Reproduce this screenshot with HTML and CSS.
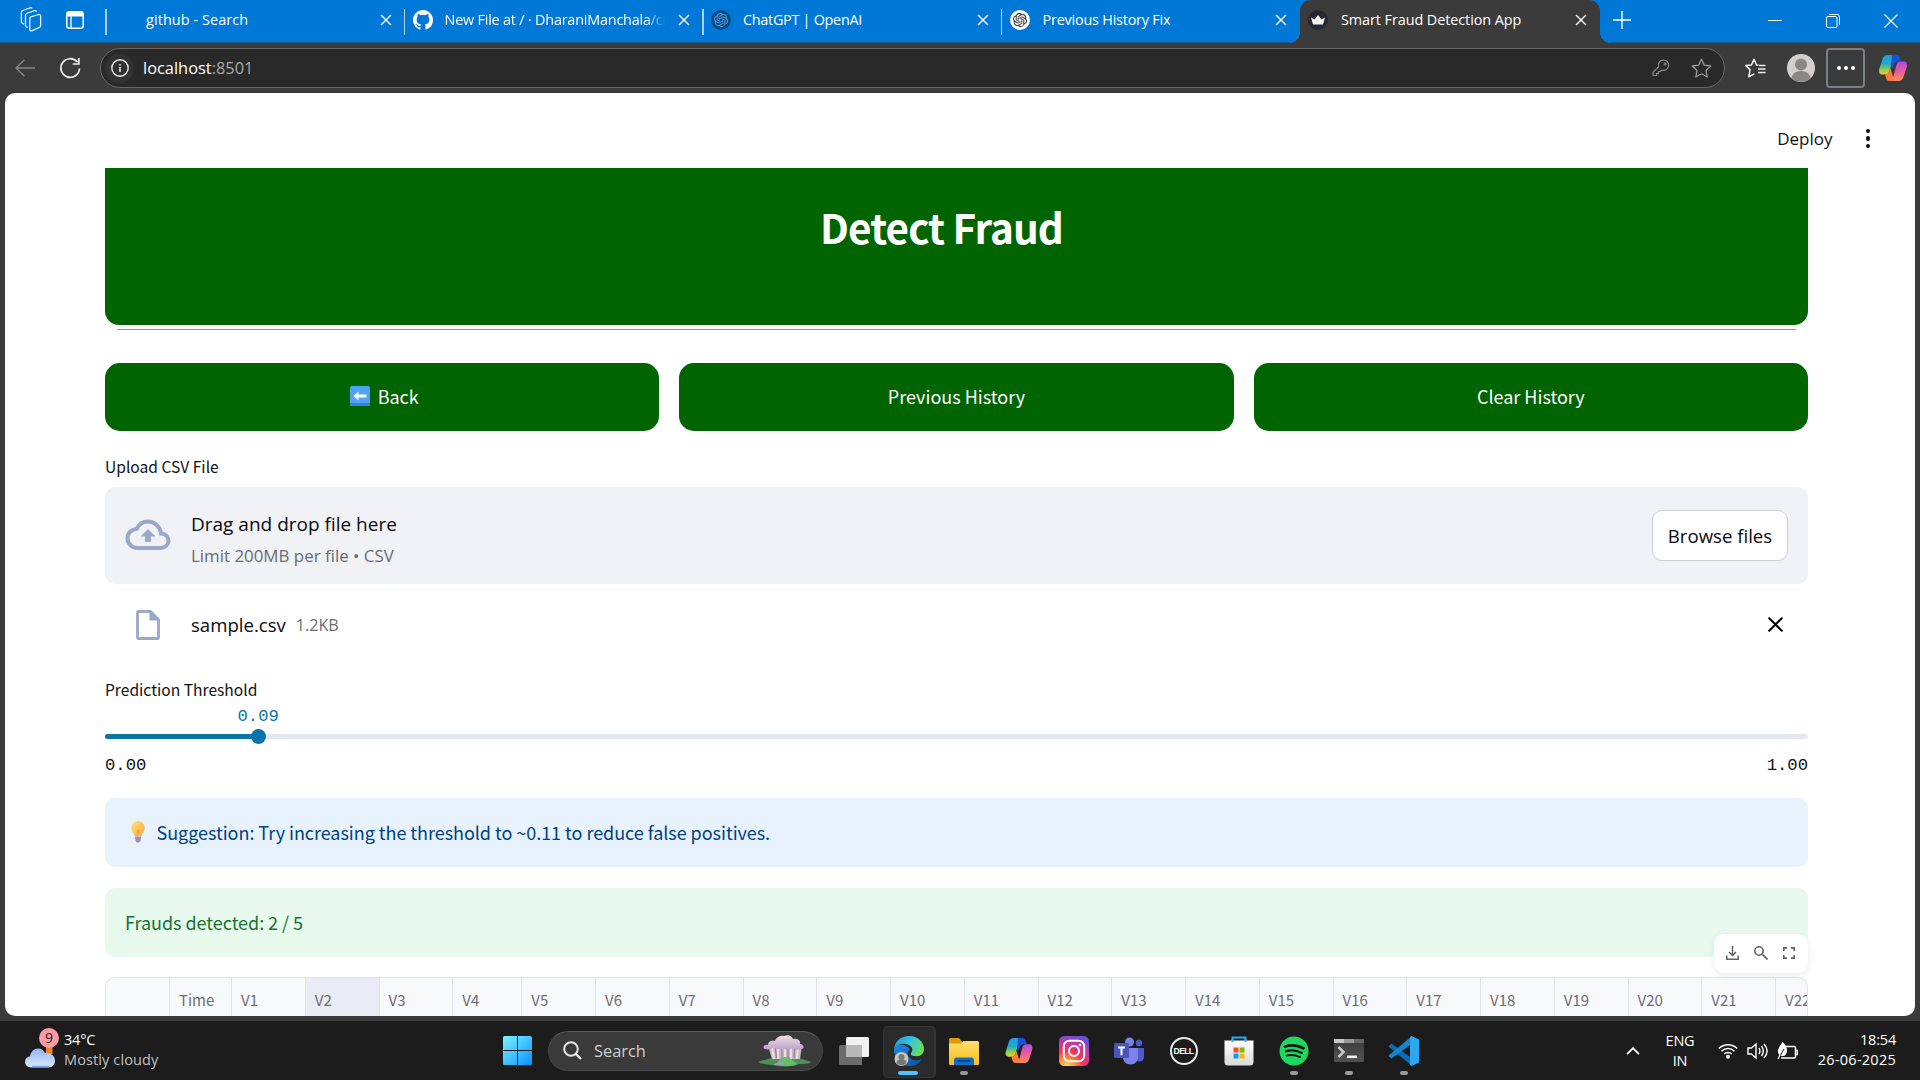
FILE: index.html
```html
<!DOCTYPE html>
<html lang="en">
<head>
<meta charset="utf-8">
<title>Smart Fraud Detection App</title>
<link rel="stylesheet" href="styles.css">
</head>
<body>
<svg class="defs" width="0" height="0">
  <defs>
    <linearGradient id="cpA" x1="0" y1="0" x2="0" y2="1"><stop offset="0" stop-color="#1a9ff0"/><stop offset=".45" stop-color="#22a9c9"/><stop offset=".75" stop-color="#8fce4e"/><stop offset="1" stop-color="#f7cf1c"/></linearGradient>
    <linearGradient id="cpB" x1=".2" y1="0" x2=".3" y2="1"><stop offset="0" stop-color="#a44df0"/><stop offset=".5" stop-color="#e8589f"/><stop offset="1" stop-color="#ff8a55"/></linearGradient>
    <linearGradient id="win" x1="0" y1="0" x2="1" y2="1"><stop offset="0" stop-color="#7af3ff"/><stop offset="1" stop-color="#0a93fb"/></linearGradient>
    <linearGradient id="edgeTop" x1="0" y1=".3" x2="1" y2=".6"><stop offset="0" stop-color="#1f9de0"/><stop offset=".5" stop-color="#35c4dc"/><stop offset="1" stop-color="#6be04c"/></linearGradient>
    <linearGradient id="edgeLow" x1="0" y1="0" x2="1" y2="1"><stop offset="0" stop-color="#1b8ee0"/><stop offset="1" stop-color="#0b4f9e"/></linearGradient>
    <linearGradient id="fold" x1="0" y1="0" x2="0" y2="1"><stop offset="0" stop-color="#ffdf70"/><stop offset="1" stop-color="#fbbc17"/></linearGradient>
    <radialGradient id="ig" cx=".25" cy="1.05" r="1.1"><stop offset="0" stop-color="#ffdd55"/><stop offset=".25" stop-color="#ff9a3d"/><stop offset=".5" stop-color="#f4364f"/><stop offset=".75" stop-color="#c837ab"/><stop offset="1" stop-color="#6a4fd8"/></radialGradient>
    <linearGradient id="cloud" x1="0" y1="0" x2="0" y2="1"><stop offset="0" stop-color="#8fb6f3"/><stop offset="1" stop-color="#dbe9fb"/></linearGradient>
    <linearGradient id="bulb" x1="0" y1="0" x2="1" y2="1"><stop offset="0" stop-color="#ffe37a"/><stop offset="1" stop-color="#fba93a"/></linearGradient>
    <linearGradient id="term" x1="0" y1="0" x2="0" y2="1"><stop offset="0" stop-color="#3c3c3c"/><stop offset="1" stop-color="#505050"/></linearGradient>
    <linearGradient id="bag" x1="0" y1="0" x2="0" y2="1"><stop offset="0" stop-color="#fff"/><stop offset="1" stop-color="#d9d9d9"/></linearGradient>
    <linearGradient id="tree" x1="0" y1="0" x2="0" y2="1"><stop offset="0" stop-color="#f1dce0"/><stop offset="1" stop-color="#b9a4cf"/></linearGradient>
    <symbol id="x" viewBox="0 0 12 12"><path d="M1 1l10 10M11 1L1 11" fill="none" stroke="currentColor" stroke-width="1.4"/></symbol>
    <symbol id="openai" viewBox="0 0 24 24"><path fill="currentColor" d="M22.28 9.82a5.98 5.98 0 0 0-.52-4.91 6.05 6.05 0 0 0-6.51-2.9A6.07 6.07 0 0 0 4.98 4.18a5.98 5.98 0 0 0-4 2.9 6.05 6.05 0 0 0 .74 7.1 5.98 5.98 0 0 0 .51 4.91 6.05 6.05 0 0 0 6.52 2.9A5.98 5.98 0 0 0 13.26 24a6.06 6.06 0 0 0 5.77-4.21 5.99 5.99 0 0 0 4-2.9 6.06 6.06 0 0 0-.75-7.07zm-9.02 12.61a4.48 4.48 0 0 1-2.88-1.04l.14-.08 4.78-2.76a.8.8 0 0 0 .39-.68v-6.74l2.02 1.17a.07.07 0 0 1 .04.05v5.58a4.5 4.5 0 0 1-4.49 4.5zm-9.66-4.13a4.47 4.47 0 0 1-.53-3.01l.14.09 4.78 2.76a.77.77 0 0 0 .78 0l5.84-3.37v2.33a.08.08 0 0 1-.03.06L9.74 19.95a4.5 4.5 0 0 1-6.14-1.65zM2.34 7.9a4.49 4.49 0 0 1 2.37-1.98V11.6a.77.77 0 0 0 .39.68l5.81 3.35-2.02 1.17a.08.08 0 0 1-.07 0l-4.83-2.79A4.5 4.5 0 0 1 2.34 7.87zm16.6 3.86L13.1 8.36l2.02-1.16a.08.08 0 0 1 .07 0l4.83 2.79a4.49 4.49 0 0 1-.68 8.1v-5.68a.79.79 0 0 0-.4-.65zm2.01-3.02l-.14-.09-4.78-2.78a.78.78 0 0 0-.78 0L9.41 9.23V6.9a.07.07 0 0 1 .03-.06l4.83-2.79a4.5 4.5 0 0 1 6.68 4.66zM8.31 12.86l-2.02-1.16a.08.08 0 0 1-.04-.06V6.07a4.5 4.5 0 0 1 7.38-3.45l-.14.08-4.78 2.76a.8.8 0 0 0-.4.68zm1.1-2.36l2.6-1.5 2.6 1.5v3l-2.6 1.5-2.6-1.5z"/></symbol>
    <symbol id="copilot" viewBox="0 0 28 26"><path fill="url(#cpA)" d="M9 0h9c-2.500 0-3.500 1.500-4.200 4L10.500 16c-.8 2.500-2 3.500-4.500 3.500H3C.5 19.500-.4 17 .2 14L3.500 4C4.500 1.200 6 0 9 0z"/><path fill="#1753d8" d="M13 0h5c1.800 0 2.500 1.500 3.200 4l.8 2.500h-3c-2.400 0-3.600 1.500-4.300 3.500l-1.500 4-1-5z"/><path fill="url(#cpB)" d="M19 26h-9c2.500 0 3.500-1.500 4.200-4L17.500 10c.8-2.500 2-3.500 4.500-3.500h3c2.500 0 3.400 2.500 2.800 5.500L24.500 22c-1 2.800-2.500 4-5.500 4z"/><path fill="#ff7a3c" d="M15 26h-5c-1.800 0-2.500-1.500-3.200-4L6 19.500c2.500 0 3.800-1 4.500-3.500l1-3z"/></symbol>
  </defs>
</svg>

<header class="tabbar">
  <div class="tabtools">
    <svg width="22" height="26" viewBox="0 0 22 26" fill="none" stroke="#e4f1fd" stroke-width="1.300" stroke-linejoin="round"><path d="M10.800 9.800l7.800-2.300c1.200-.3 2 .3 2 1.400v9.800c0 .8-.4 1.400-1.200 1.700l-7.600 3.400c-1 .4-2-.2-2-1.300v-11c0-.9.300-1.400 1-1.700zM8 20.500l-1.500-.6c-.7-.3-1-.8-1-1.600V8.200c0-.8.400-1.400 1.200-1.700l7.800-2.800c1-.3 1.700 0 2 1M4.200 17.200l-1.800-.8c-.7-.3-1-.8-1-1.500V5.200c0-.8.400-1.400 1.200-1.700l7.600-2.700c.9-.3 1.600 0 1.900.8"/></svg>
    <svg width="18" height="18" viewBox="0 0 18 18"><rect x=".8" y=".8" width="16.400" height="16.400" rx="2.500" fill="none" stroke="#fff" stroke-width="1.500"/><path fill="#fff" d="M1 1h16v4.500H1z"/><path d="M5 5v12" stroke="#fff" stroke-width="1.300"/></svg>
  </div>
  <div class="tab"><span class="fav"></span><span class="name n1">github - Search</span><svg class="tx" width="12" height="12"><use href="#x"/></svg></div>
  <div class="tab"><svg class="fav" width="20" height="20" viewBox="0 0 16 16"><path fill="#fff" d="M8 0C3.580 0 0 3.580 0 8c0 3.540 2.290 6.530 5.470 7.590.4.070.55-.17.55-.38 0-.19-.01-.82-.01-1.490-2.010.37-2.530-.49-2.690-.94-.09-.23-.48-.94-.82-1.130-.28-.15-.68-.52-.01-.53.63-.01 1.080.58 1.230.82.72 1.210 1.870.87 2.330.66.070-.52.28-.87.51-1.070-1.780-.2-3.640-.89-3.640-3.950 0-.87.31-1.590.82-2.150-.08-.2-.36-1.020.08-2.120 0 0 .67-.21 2.200.82a7.500 7.500 0 0 1 4 0c1.530-1.040 2.200-.82 2.200-.82.44 1.100.16 1.920.08 2.120.51.56.82 1.270.82 2.150 0 3.070-1.870 3.750-3.650 3.950.29.25.54.73.54 1.480 0 1.070-.01 1.930-.01 2.200 0 .21.15.46.55.38A8 8 0 0 0 16 8c0-4.420-3.580-8-8-8z"/></svg><span class="name n2">New File at / · DharaniManchala/cr</span><svg class="tx" width="12" height="12"><use href="#x"/></svg></div>
  <div class="tab"><span class="fav gpt dim"><svg width="14" height="14"><use href="#openai"/></svg></span><span class="name n3">ChatGPT | OpenAI</span><svg class="tx" width="12" height="12"><use href="#x"/></svg></div>
  <div class="tab"><span class="fav gpt"><svg width="14" height="14"><use href="#openai"/></svg></span><span class="name n4">Previous History Fix</span><svg class="tx" width="12" height="12"><use href="#x"/></svg></div>
  <div class="tab active"><span class="fav crown"><svg width="14" height="10" viewBox="0 0 14 10"><path fill="#f4f4f4" d="M0 2.500l3.500 2L7 0l3.500 4.500 3.500-2L12 9.500H2z"/></svg></span><span class="name n5">Smart Fraud Detection App</span><svg class="tx" width="12" height="12"><use href="#x"/></svg></div>
  <svg class="plus" width="18" height="18" viewBox="0 0 18 18"><path d="M9 0v18M0 9h18" stroke="#fff" stroke-width="1.400"/></svg>
  <div class="winctl">
    <svg width="14" height="14" viewBox="0 0 14 14"><path d="M0 6.500h14" stroke="#fff"/></svg>
    <svg width="14" height="14" viewBox="0 0 14 14" fill="none" stroke="#fff"><rect x=".5" y="2.500" width="10.500" height="11" rx="1.500"/><path d="M3 .5h8c1.500 0 2.500 1 2.500 2.500v8"/></svg>
    <svg width="14" height="14" viewBox="0 0 14 14"><path d="M.5.5l13 13M13.500.5l-13 13" stroke="#fff" stroke-width="1.200"/></svg>
  </div>
</header>

<div class="toolbar">
  <svg width="20" height="18" viewBox="0 0 20 18" fill="none" stroke="#858585" stroke-width="1.400"><path d="M20 9H1M9.500.8L1 9l8.500 8.200"/></svg>
  <svg class="reload" width="22" height="22" viewBox="0 0 22 22" fill="none" stroke="#f2f2f2" stroke-width="1.700"><path d="M20.500 11.500A9.300 9.300 0 1 1 18.300 5M19.800 1v6h-6"/></svg>
  <div class="address">
    <span class="info"><svg width="18" height="18" viewBox="0 0 18 18"><circle cx="9" cy="9" r="8.200" fill="none" stroke="#eee" stroke-width="1.400"/><path d="M9 8v5M9 5v1.500" stroke="#eee" stroke-width="1.500"/></svg></span>
    <span class="url">localhost<i>:8501</i></span>
    <svg class="key" width="18" height="18" viewBox="0 0 18 18" fill="none" stroke="#8c8c8c" stroke-width="1.200"><path d="M11.500 1a5.200 5.200 0 0 1 0 10.400c-.8 0-1.300-.1-1.900-.3L8 12.600H6.300v2H4.500v1.900H1v-3.200l5.600-5.500A5.200 5.200 0 0 1 11.500 1z"/><circle cx="13" cy="5" r="1"/></svg>
    <svg width="21" height="20" viewBox="0 0 21 20" fill="none" stroke="#9a9a9a" stroke-width="1.300" stroke-linejoin="round"><path d="M10.500 1.200l2.800 6 6.400.8-4.700 4.500 1.200 6.500-5.700-3.200L4.800 19 6 12.500 1.300 8l6.400-.8z"/></svg>
  </div>
  <svg class="favs" width="21" height="20" viewBox="0 0 21 20" fill="none" stroke="#f2f2f2" stroke-width="1.500" stroke-linejoin="round"><path d="M13.500 7.300l-2-.3L9 1.200 6.500 6.900l-5.700.7 4.200 4-1.200 7.200 5.500-3M14 7.500h6.500M13 11h7.500M13 14.500h7.500"/></svg>
  <svg class="avatar" width="28" height="28" viewBox="0 0 28 28"><circle cx="14" cy="14" r="14" fill="#d2d0ce"/><circle cx="14" cy="10.500" r="6" fill="#8a8886"/><path d="M4.500 24a9.500 7 0 0 1 19 0A14 14 0 0 1 4.500 24z" fill="#8a8886"/></svg>
  <div class="more"><b></b><b></b><b></b></div>
  <svg class="cp" width="28" height="26"><use href="#copilot"/></svg>
</div>

<main class="page">
  <div class="apphead"><span class="deploy">Deploy</span><div class="dots"><b></b><b></b><b></b></div></div>
  <section class="content">
    <h1 class="banner"><span>Detect Fraud</span></h1>
    <div class="rule"></div>
    <div class="actions">
      <button><svg class="arrow" width="20" height="20" viewBox="0 0 20 20"><rect width="20" height="20" rx="2" fill="#4fa3f7"/><path d="M0 17h20v1a2 2 0 0 1-2 2H2a2 2 0 0 1-2-2z" fill="#3a7fdc"/><path d="M3.500 10l5-4.500v3H16.500v3H8.500v3z" fill="#fff"/></svg><span>Back</span></button>
      <button><span>Previous History</span></button>
      <button><span>Clear History</span></button>
    </div>
    <div class="label up">Upload CSV File</div>
    <div class="drop">
      <svg class="cloudup" width="46" height="32" viewBox="0 0 46 32"><path d="M12.500 29h23c4.500 0 8-3.200 8-7.300 0-4-3.200-7.200-7.500-7.200C35 7.500 29.500 2.500 23 2.500c-5 0-9.200 2.800-11.200 7.200C6.500 10.200 2.500 14.200 2.500 19.200 2.500 24.600 7 29 12.500 29z" fill="none" stroke="#9aa7c7" stroke-width="4"/><path fill="#9aa7c7" d="M23 10l7.500 7.500H26V23h-6v-5.500h-4.500z"/></svg>
      <div class="droptext"><span class="d1">Drag and drop file here</span><span class="d2">Limit 200MB per file • CSV</span></div>
      <button class="browse"><span>Browse files</span></button>
    </div>
    <div class="fileline"></div>
    <div class="file">
      <svg width="24" height="30" viewBox="0 0 24 30"><path d="M3 1.500h11.500L22.500 9.500V27c0 1-.5 1.500-1.500 1.500H3c-1 0-1.500-.5-1.500-1.500V3c0-1 .5-1.500 1.500-1.500z" fill="none" stroke="#9aa7c7" stroke-width="2.800"/><path fill="#9aa7c7" d="M13.500 1.500l9 9h-9z"/></svg>
      <span class="fname">sample.csv</span><span class="fsize">1.2KB</span>
      <svg class="fx" width="15" height="15" viewBox="0 0 15 15"><path d="M1.200 1.200l12.600 12.600M13.800 1.200L1.200 13.800" stroke="#000" stroke-width="2" stroke-linecap="round"/></svg>
    </div>
    <div class="label thr">Prediction Threshold</div>
    <div class="sval">0.09</div>
    <div class="track"><div class="fill" style="width:9%"></div><div class="thumb"></div></div>
    <div class="range"><span>0.00</span><span>1.00</span></div>
    <div class="alert infobox"><svg width="14" height="22" viewBox="0 0 14 22"><path d="M7 0a6.800 6.800 0 0 1 6.800 6.800c0 3.400-2.600 5-3.200 8.200H3.400C2.800 11.800.2 10.200.2 6.800A6.800 6.800 0 0 1 7 0z" fill="url(#bulb)"/><path d="M5.500 9.500L7 8l1.500 1.500L7.500 15h-1z" fill="#f6a52e"/><path d="M4 15.500h6l-.5 4.500L8 21.500H6L4.500 20z" fill="#a48bb3"/></svg><span>Suggestion: Try increasing the threshold to ~0.11 to reduce false positives.</span></div>
    <div class="alert okbox"><span>Frauds detected: 2 / 5</span>
      <div class="gridtools">
        <svg width="13" height="14" viewBox="0 0 13 14" fill="none" stroke="#5f6068" stroke-width="1.500"><path d="M6.500 0v9.500M3 6l3.500 3.500L10 6M.8 9.500v3.700h11.400V9.500"/></svg>
        <svg width="14" height="14" viewBox="0 0 14 14" fill="none" stroke="#5f6068" stroke-width="1.600"><circle cx="5" cy="5" r="4.200"/><path d="M8 8l5.500 5.500"/></svg>
        <svg width="12" height="12" viewBox="0 0 12 12" fill="none" stroke="#5f6068" stroke-width="1.700"><path d="M.8 4V.8H4M8 .8h3.200V4M11.200 8v3.200H8M4 11.200H.8V8"/></svg>
      </div>
    </div>
    <div class="grid"><span></span><span>Time</span><span>V1</span><span class="hot">V2</span><span>V3</span><span>V4</span><span>V5</span><span>V6</span><span>V7</span><span>V8</span><span>V9</span><span>V10</span><span>V11</span><span>V12</span><span>V13</span><span>V14</span><span>V15</span><span>V16</span><span>V17</span><span>V18</span><span>V19</span><span>V20</span><span>V21</span><span>V22</span></div>
  </section>
</main>

<footer class="taskbar">
  <div class="weather">
    <div class="wicon"><svg width="32" height="24" viewBox="0 0 32 24"><path fill="#f58220" d="M22 0h6.500v9H22z"/><path fill="url(#cloud)" d="M7.500 22.500C3.500 22.500 1 20 1 16.800c0-3 2-5 5-5.500C7 6.500 10 3.500 14 3.500c3.500 0 5.500 1.800 7 4.500 5.500-.8 10 2.500 10 7.500 0 4-2.500 7-6.500 7z"/><path d="M8 21.500h17" stroke="#7ea2e0" stroke-width="1.500"/></svg><span class="badge">9</span></div>
    <div class="wtext"><span>34°C</span><span class="sub">Mostly cloudy</span></div>
  </div>
  <svg class="start" width="29" height="29" viewBox="0 0 29 29" fill="url(#win)"><path d="M0 1.500Q0 0 1.500 0H14v14H0zM15 0h12.500Q29 0 29 1.500V14H15zM0 15h14v14H1.500Q0 29 0 27.500zM15 15h14v12.500Q29 29 27.500 29H15z"/></svg>
  <div class="search">
    <svg width="19" height="19" viewBox="0 0 19 19" fill="none" stroke="#e6e6e6" stroke-width="2"><circle cx="8" cy="8" r="6.800"/><path d="M12.800 12.800l5.200 5.200" stroke-width="2.400"/></svg>
    <span>Search</span>
    <svg class="art" width="54" height="32" viewBox="0 0 54 32"><path fill="#4d8f58" d="M0 27c6-2 10-3 14-4h26c5 1 9 3 14 4-4 2-9 2-13 2-4 3-22 3-27 1-5 0-10-1-14-3z"/><path fill="#c9b4c4" d="M10 11h34l-2 13H14z"/><path stroke="#f0dfe0" stroke-width="2" d="M14 12l2 12M20 13v11M27 13v11M33 13v11M40 12l-1 12"/><path stroke="#8a7598" d="M17.500 13l1 10M24 14v9M30 14v9M36.500 13l-.5 10"/><path fill="url(#tree)" d="M7 14c-3-1-1-5 3-4 0-4 4-5 7-4 1-4 6-6 9-5 4-2 8 0 9 3 5-1 8 2 7 5 4 0 5 5 1 5-3 1-6 1-8-1-4 2-8 2-10 0-4 2-8 1-9-1-2 2-6 3-9 2z"/><path fill="#65bd68" d="M18 29c3-5 8-8 12-7 4 2 6 5 9 7-6 3-16 3-21 0z"/><path fill="#8fa8a5" d="M15 30l8-4 4 4z"/></svg>
  </div>
  <div class="apps">
    <div class="app"><svg width="30" height="28" viewBox="0 0 30 28"><path fill="#6b6b6b" d="M1.500 8H23v20H1.500Q0 28 0 26.500v-17Q0 8 1.500 8z"/><path fill="#f2f2f2" d="M8.500 0h20Q30 0 30 1.500v17q0 1.500-1.500 1.500H7V1.500Q7 0 8.500 0z"/><path fill="#b9b9b9" d="M7 8h16v12H7z"/></svg></div>
    <div class="app cur"><svg width="32" height="32" viewBox="0 0 32 32"><path fill="url(#edgeLow)" d="M1 14C1 23 7 31 17 31c5 0 9-2 12-7-4 2-9 2-12-1-3-3-3-6 0-9C11 8 3 9 1 14z"/><path fill="url(#edgeTop)" d="M1 14C2 6 8 1 16 1c9 0 15 6 15 13 0 5-4 8-9 7-3 0-5-1-4-3 3-3 1-8-5-9C8 8 3 10 1 14z"/><circle cx="8.500" cy="24" r="7" fill="#c8c6c4"/><circle cx="8.500" cy="22" r="3" fill="#7a7876"/><path fill="#7a7876" d="M3.500 28a5 4 0 0 1 10 0c-3 3-7 3-10 0z"/></svg><i></i></div>
    <div class="app dot"><svg width="30" height="28" viewBox="0 0 30 28"><path fill="#e19a07" d="M1.500 1H10l3 3.500V9H0V2.500Q0 1 1.500 1z"/><path fill="url(#fold)" d="M0 6.500h12L14.500 4H28.500Q30 4 30 5.500v21Q30 28 28.500 28h-27Q0 28 0 26.500z"/><path fill="#0f6fc5" d="M5 28v-5q0-2.500 2.500-2.500h15Q25 20.500 25 23v5z"/><path stroke="#0a3f7c" stroke-width="1.600" d="M8.500 24h13"/></svg><i></i></div>
    <div class="app"><svg width="28" height="25"><use href="#copilot"/></svg></div>
    <div class="app"><svg width="30" height="30" viewBox="0 0 30 30"><rect width="30" height="30" rx="5.500" fill="url(#ig)"/><rect x="4.800" y="4.800" width="20.400" height="20.400" rx="5.500" fill="none" stroke="#fff" stroke-width="2"/><circle cx="15" cy="15" r="5" fill="none" stroke="#fff" stroke-width="2"/><circle cx="21" cy="9" r="1.300" fill="#fff"/></svg></div>
    <div class="app"><svg width="30" height="28" viewBox="0 0 30 28"><circle cx="25" cy="6" r="3.200" fill="#5059c9"/><path fill="#5059c9" d="M20 11h10v9c0 3-2 4.500-4.500 4.500S20 23 20 20z"/><circle cx="15.500" cy="5" r="4.500" fill="#7b83eb"/><path fill="#7b83eb" d="M9 11h15v9c0 4-3 7.500-7.500 7.500S9 24 9 20z"/><rect y="6" width="15" height="15" rx="1.500" fill="#4b53bc"/><path fill="#fff" d="M4 9.500h7v1.900H8.500v6.800h-2v-6.800H4z"/></svg></div>
    <div class="app"><div class="dell">DELL</div></div>
    <div class="app"><svg width="30" height="30" viewBox="0 0 30 30"><path d="M8.500 6V1.500h13V6" fill="none" stroke="#1fb0f5" stroke-width="2"/><path fill="url(#bag)" d="M.5 4.500h29V26q0 3.500-3.500 3.500H4Q.5 29.500.5 26z"/><path d="M8.500 6V3M21.500 6V3" stroke="#1fb0f5" stroke-width="2"/><path fill="#f25022" d="M9.500 11.500h5v5h-5z"/><path fill="#7fba00" d="M15.500 11.500h5v5h-5z"/><path fill="#00a4ef" d="M9.500 17.500h5v5h-5z"/><path fill="#ffb900" d="M15.500 17.500h5v5h-5z"/></svg></div>
    <div class="app dot"><svg width="30" height="30" viewBox="0 0 30 30"><circle cx="15" cy="15" r="14.500" fill="#1ed760"/><path fill="none" stroke="#161616" stroke-linecap="round" d="M6 10.500c6-1.800 13-1.200 18.500 1.700" stroke-width="2.800"/><path fill="none" stroke="#161616" stroke-linecap="round" d="M7 15.200c5-1.400 11-.9 15.800 1.700" stroke-width="2.300"/><path fill="none" stroke="#161616" stroke-linecap="round" d="M7.600 19.600c4.500-1.100 9-.7 13.400 1.600" stroke-width="1.900"/></svg><i></i></div>
    <div class="app dot"><svg width="30" height="23" viewBox="0 0 30 23"><rect width="30" height="23" rx="1" fill="url(#term)"/><path fill="#c8c8c8" d="M0 0h10v4H0z"/><path fill="#999" d="M10 0h10v4H10z"/><path fill="#666" d="M20 0h10v4H20z"/><path d="M4.500 8l5 5-5 5" fill="none" stroke="#c9c9c9" stroke-width="2.500"/><path stroke="#f4f4f4" stroke-width="2.500" d="M13 17.800h10"/></svg><i></i></div>
    <div class="app dot"><svg width="30" height="30" viewBox="0 0 30 30"><path fill="#0a6cb3" d="M0 9.500l2.500-2L22.500 22v7.500L.4 11.300c-.6-.6-.6-1.300-.4-1.800z"/><path fill="#1287d0" d="M0 20.500l2.500 2L22.500 8V.5L.4 18.700c-.6.600-.6 1.300-.4 1.800z"/><path fill="#2aa8f2" d="M22.500 0L30 3.500v23L22.500 30l-1.500-1V1z"/></svg><i></i></div>
  </div>
  <div class="tray">
    <svg class="chev" width="14" height="8" viewBox="0 0 14 8" fill="none" stroke="#fff" stroke-width="1.800"><path d="M1 7.200l6-6 6 6"/></svg>
    <div class="lang"><span>ENG</span><span>IN</span></div>
    <svg class="wifi" width="20" height="16" viewBox="0 0 20 16" fill="none" stroke="#fff" stroke-width="1.500"><path d="M.8 5.500a13 13 0 0 1 18.400 0M3.500 8.300a9.200 9.200 0 0 1 13 0M6.200 11a5.400 5.400 0 0 1 7.600 0"/><circle cx="10" cy="13.800" r="1.300" fill="#fff"/></svg>
    <svg class="vol" width="21" height="18" viewBox="0 0 21 18" fill="none" stroke="#fff" stroke-width="1.400"><path d="M1 6h3.500L9 2v14l-4.500-4H1zM12 6c1.300 2 1.300 4 0 6M14.500 4c2.500 3.500 2.500 6.500 0 10M17 2c4 4.500 4 9.500 0 14"/></svg>
    <svg class="bat" width="21" height="18" viewBox="0 0 21 18"><path d="M8 4.500h9q1.500 0 1.500 1.500v8.500q0 1.500-1.500 1.500H4M19 8.500h1.500v4H19" fill="none" stroke="#fff" stroke-width="1.500"/><path fill="#fff" d="M5.500 0c3 2.500 4.500 5.500 4.500 8.500 0 3.500-1.800 5.500-4.500 5.500S.5 12 1 8.500C1.500 5 4 3 5.500 0z"/><path stroke="#1c1c1c" d="M7 7l-5 9"/><path stroke="#fff" stroke-width="1.200" d="M3 13l-2 4"/></svg>
    <div class="clock"><span>18:54</span><span class="date">26-06-2025</span></div>
  </div>
</footer>
</body>
</html>
```
FILE: styles.css
```css
* { box-sizing: border-box; }
html, body { margin: 0; width: 1920px; height: 1080px; overflow: hidden; }
body {
  display: flex;
  flex-direction: column;
  background: #3b3b3b;
  font-family: "Open Sans", "Noto Sans", sans-serif;
}
svg { display: block; flex: none; }
.defs { position: absolute; }
span { white-space: nowrap; }
button { border: 0; padding: 0; font: inherit; }

/* tab strip */
.tabbar { display: flex; flex: none; height: 43px; background: #0078d7; border-bottom: 1px solid #1c5c94; color: #fff; }
.tabtools { width: 106px; height: 42px; padding: 0 22px 2px 20px; display: flex; align-items: center; justify-content: space-between; }
.tab { position: relative; width: 298.500px; height: 43px; padding: 0 13px 3px 8px; display: flex; align-items: center; }
.tab::before { content: ""; position: absolute; left: -1px; top: 9px; width: 1.500px; height: 26px; background: #a9d2f4; }
.tab.active { background: #3b3b3b; border-radius: 11px 11px 0 0; width: 300px; }
.tab.active::before { left: -10px; top: 33px; width: 10px; height: 10px; background: radial-gradient(circle at 0 0, #0078d7 9.500px, #3b3b3b 10px); }
.tab.active::after { content: ""; position: absolute; right: -10px; top: 33px; width: 10px; height: 10px; background: radial-gradient(circle at 100% 0, #0078d7 9.500px, #3b3b3b 10px); }
.fav { width: 20px; height: 20px; flex: none; margin-right: 13px; }
.gpt { border-radius: 50%; background: #fff; color: #222; display: flex; align-items: center; justify-content: center; }
.gpt.dim { background: #0a4a84; color: #5ba0dc; }
.crown { border-radius: 50%; background: #272733; display: flex; align-items: center; justify-content: center; }
.name { font-size: 14.400px; letter-spacing: -0.200px; flex: 1; overflow: hidden; margin-right: 10px; padding-bottom: 2px; }
.n1 { letter-spacing: 0.100px; margin-left: -1px; }
.n2 { letter-spacing: -0.200px; margin-left: -1px; -webkit-mask-image: linear-gradient(90deg, #000 90%, transparent 99%); }
.n3 { letter-spacing: -0.280px; margin-left: -1px; }
.n5 { letter-spacing: -0.070px; }
.plus { margin: 11px 0 0 13px; }
.winctl { margin-left: auto; width: 130px; margin-right: 22px; display: flex; justify-content: space-between; align-items: center; }

/* address row */
.toolbar { display: flex; flex: none; align-items: center; height: 50px; padding-left: 15px; }
.reload { margin-left: 24px; }
.address { display: flex; align-items: center; width: 1625px; height: 40px; margin-left: 19px; border: 1.500px solid #686868; border-radius: 20px; background: #292929; padding: 0 12px 0 4px; }
.info { width: 29px; height: 29px; border-radius: 50%; background: #323232; display: flex; align-items: center; justify-content: center; }
.url { color: #fff; font-size: 16.400px; margin-left: 9px; flex: 1; padding-bottom: 2px; }
.url i { font-style: normal; color: #a8a8a8; }
.key { margin-right: 21px; }
.favs { margin-left: 20px; }
.avatar { margin-left: 21px; }
.more { width: 39px; height: 40px; margin-left: 11px; border: 2px solid #7b8088; border-radius: 4px; display: flex; align-items: center; justify-content: center; gap: 3px; }
.more b { width: 4px; height: 4px; border-radius: 50%; background: #fff; }
.cp { margin-left: 14px; }

/* web page */
.page { width: 1910px; height: 923px; margin-left: 5px; flex: none; background: #fff; border-radius: 10px; overflow: hidden; }
.apphead { height: 75px; display: flex; align-items: center; justify-content: flex-end; padding: 16px 45px 0 0; }
.deploy { font-size: 17px; color: #111; margin-right: 33px; padding-bottom: 1px; }
.dots { display: flex; flex-direction: column; gap: 3px; }
.dots b { width: 4.500px; height: 4.500px; border-radius: 50%; background: #111; }
.content { width: 1703px; margin-left: 100px; }
.banner { margin: 0; height: 156.500px; background: #006400; border-radius: 0 0 14px 14px; color: #fff; font: 700 40.500px/61px "Noto Sans CJK SC", sans-serif; letter-spacing: -0.900px; text-align: center; padding: 28px 30px 0 0; }
.rule { height: 1px; margin: 4px 12px 0; background: #6fab6f; }
.actions { display: grid; grid-template-columns: repeat(3, 1fr); gap: 20px; margin-top: 33px; }
.actions button { height: 68.500px; border-radius: 15px; background: #006400; color: #fff; font: 400 18px/30px "Noto Sans CJK SC", sans-serif; display: flex; align-items: center; justify-content: center; gap: 8px; padding-bottom: 1px; }
.arrow { margin-left: 4px; }
.label { font: 400 15.600px/24px "Noto Sans CJK SC", sans-serif; color: #111; }
.up { margin-top: 22.500px; }
.drop { display: flex; height: 97.500px; margin-top: 9px; border-radius: 10px; background: #f0f2f6; padding: 0 20px; align-items: center; }
.droptext { display: flex; flex-direction: column; margin-left: 20px; flex: 1; padding-top: 9px; }
.d1 { font-size: 19px; line-height: 32px; color: #0a0a0a; }
.d2 { font-size: 16.900px; line-height: 32px; color: #6b6c73; }
.browse { width: 136px; height: 51px; border: 1.500px solid #cfd0d3; border-radius: 10px; background: #fff; color: #0a0a0a; font-size: 18.600px; padding-top: 1px; }
.fileline { height: 1px; margin: 5px 8px 0; background: #f6f7f9; }
.file { display: flex; align-items: center; height: 69px; padding: 0 25px 0 31px; }
.fname { margin-left: 31px; font-size: 18.600px; color: #0a0a0a; padding-bottom: 1px; }
.fsize { margin-left: 10px; font-size: 16.100px; color: #6b6c73; flex: 1; }
.thr { margin-top: 18px; }
.sval, .range { font: 400 17.200px/22px "Liberation Mono", monospace; color: #111; }
.sval { color: #0c74a8; padding-left: 132.500px; margin-top: 4.500px; height: 22px; }
.track { display: flex; align-items: center; height: 5px; margin-top: 6px; border-radius: 3px; background: #e4e9f1; }
.fill { height: 5px; border-radius: 3px 0 0 3px; background: #0c74a8; }
.thumb { width: 15px; height: 15px; border-radius: 50%; background: #0c74a8; margin-left: -7px; }
.range { display: flex; justify-content: space-between; margin-top: 16px; }
.alert { position: relative; display: flex; align-items: center; height: 69.500px; border-radius: 10px; font: 400 18px/30px "Noto Sans CJK SC", sans-serif; letter-spacing: -0.040px; }
.infobox { margin-top: 21px; padding-left: 26px; gap: 11.500px; background: #e8f2fc; color: #004280; }
.okbox { margin-top: 20.500px; padding-left: 20px; background: #e8f9ee; color: #177233; }
.gridtools { position: absolute; right: 0; top: 46.500px; width: 94px; height: 39px; border-radius: 10px; background: #fff; box-shadow: 0 2px 8px rgba(0,0,0,.08); display: flex; align-items: center; justify-content: space-between; padding: 0 13px 1px 12px; }
.grid { display: flex; height: 60px; margin-top: 20px; border: 1px solid #e3e4e8; border-radius: 10px 10px 0 0; overflow: hidden; background: #f8f9fb; }
.grid span { flex: none; width: 73.750px; padding-left: 9px; border-right: 1.500px solid #e1e3e8; font: 400 15px/43px "Noto Sans CJK SC", sans-serif; color: #6c6d74; }
.grid span:nth-child(1) { width: 64px; }
.grid span:nth-child(2) { width: 62px; }
.grid span:nth-child(6) { width: 69px; }
.grid .hot { background: #e9ecf4; }

/* taskbar */
.taskbar { display: flex; flex: none; align-items: center; height: 59px; margin-top: 5px; background: #1c1c1c; color: #fff; }
.weather { display: flex; width: 503px; padding: 0 0 2px 24px; align-items: center; }
.wicon { position: relative; width: 32px; height: 44px; padding-top: 17px; }
.badge { position: absolute; left: 15px; top: 0; width: 20px; height: 20px; border-radius: 50%; background: #ff99a4; color: #222; font-size: 14px; line-height: 20px; text-align: center; }
.wtext { display: flex; flex-direction: column; margin-left: 8px; font-size: 14.500px; line-height: 20px; letter-spacing: -0.200px; }
.sub { color: #c0c0c0; letter-spacing: 0.120px; }
.search { display: flex; align-items: center; width: 275px; height: 40px; margin-left: 16px; border-radius: 20px; background: #3a3a3a; border: 1px solid #484848; border-top-color: #5a5a5a; padding: 0 10px 0 14px; color: #cfcfcf; font-size: 16.400px; }
.search span { margin-left: 12px; flex: 1; }
.apps { display: flex; margin-left: 3px; }
.app { position: relative; width: 55px; height: 50px; display: flex; align-items: center; justify-content: center; }
.app i { position: absolute; left: 23.500px; bottom: 1px; width: 8px; height: 4px; border-radius: 2px; background: #9a9a9a; }
.cur::before { content: ""; position: absolute; left: 2px; top: 0; width: 50px; height: 50px; border-radius: 5px; background: #2a2a2a; border: 1px solid #353535; border-right-width: 2px; }
.cur svg { position: relative; }
.app.cur i { left: 17px; width: 20px; background: #4cc2ff; }
.dell { width: 28px; height: 28px; border: 2px solid #e8e8e8; border-radius: 50%; font: 700 8.500px/24px "Liberation Sans", sans-serif; text-align: center; letter-spacing: -0.600px; }
.tray { display: flex; align-items: center; margin-left: auto; padding-right: 24px; font-size: 14.500px; line-height: 20px; letter-spacing: -0.200px; }
.lang { display: flex; flex-direction: column; align-items: center; width: 40px; margin-left: 20px; }
.wifi { margin-left: 18px; }
.vol { margin-left: 9px; }
.bat { margin-left: 9px; }
.clock { display: flex; flex-direction: column; align-items: flex-end; margin-left: 19px; width: 79px; padding-bottom: 2px; }
.date { letter-spacing: 0.250px; }
```
